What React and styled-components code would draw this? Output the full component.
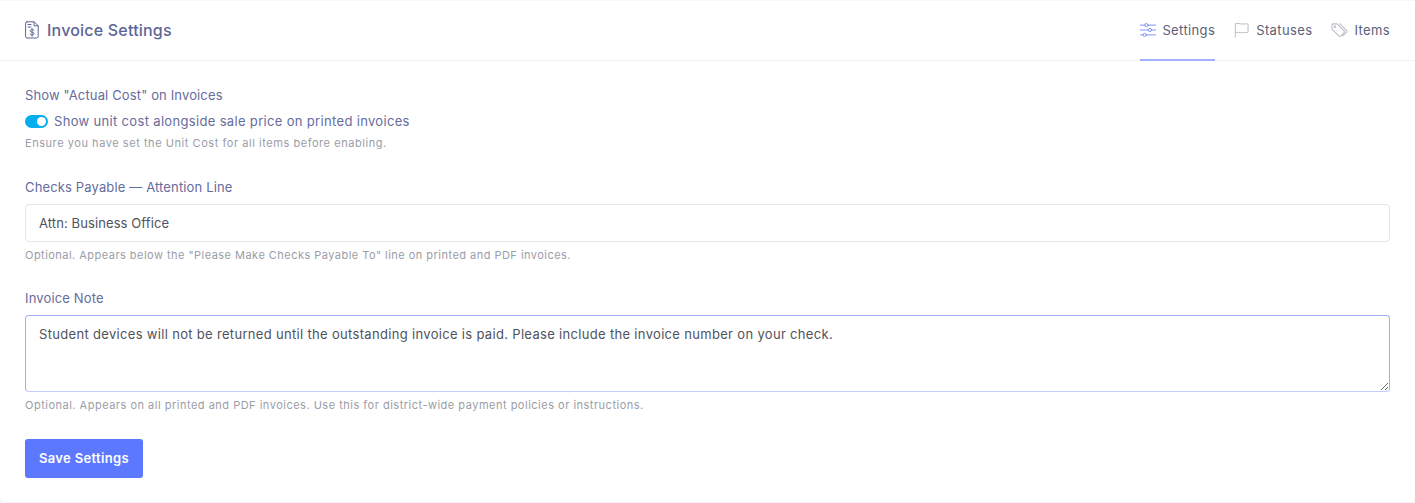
import React from "react";
import styled, { createGlobalStyle } from "styled-components";

const Global = createGlobalStyle`
  html, body { margin: 0; padding: 0; background: #f7f7fa; }
  * { box-sizing: border-box; }
  body { font-family: Inter, "Open Sans", sans-serif; -webkit-font-smoothing: antialiased; }
`;

const Card = styled.section`
  width: 1415px;
  height: 501px;
  margin-top: 1px;
  background: #fff;
  border-radius: 0 0 6px 6px;
`;

const Header = styled.header`
  height: 60px;
  padding: 0 25px;
  display: flex;
  align-items: center;
  justify-content: space-between;
  border-bottom: 1px solid #f1f1f6;
`;

const Title = styled.h1`
  margin: 0 0 2px;
  display: flex;
  align-items: center;
  gap: 8px;
  font-size: 16px;
  font-weight: 500;
  letter-spacing: 0.2px;
  color: #5e6496;
`;

const Tabs = styled.nav`
  display: flex;
  gap: 19px;
  align-self: stretch;
`;

const Tab = styled.a`
  display: flex;
  align-items: center;
  gap: 6px;
  height: 60px;
  margin-bottom: -1px;
  font-size: 13px;
  letter-spacing: 0.38px;
  color: #5d6178;
  border-bottom: 2px solid ${(p) => (p.$active ? "#a3afff" : "transparent")};
  svg { color: ${(p) => (p.$active ? "#7f92fb" : "#b9bac6")}; }
`;

const Body = styled.div`
  padding: 26px 25px 0;
`;

const Field = styled.div`
  margin-bottom: ${(p) => p.$gap}px;
`;

const Label = styled.div`
  font-size: 13px;
  line-height: 16px;
  letter-spacing: 0.14px;
  color: #666c9c;
`;

const SwitchRow = styled.label`
  display: flex;
  align-items: center;
  gap: 6px;
  margin-top: 10px;
  height: 16px;
  font-size: 13px;
  letter-spacing: 0.33px;
  color: #666c9c;
`;

const Switch = styled.span`
  position: relative;
  width: 23px;
  height: 13px;
  border-radius: 7px;
  background: #03aeef;
  &::after {
    content: "";
    position: absolute;
    top: 2px;
    right: 2px;
    width: 9px;
    height: 9px;
    border-radius: 50%;
    background: #fff;
  }
`;

const Help = styled.div`
  margin-top: ${(p) => p.$top}px;
  font-size: 11px;
  line-height: 14px;
  letter-spacing: ${(p) => p.$spacing}px;
  color: #9b9da8;
`;

const Input = styled.input`
  display: block;
  width: 100%;
  height: 38px;
  margin-top: 9px;
  padding: 0 13px;
  border: 1px solid #e4e5ee;
  border-radius: 4px;
  outline: none;
  background: #fff;
  font: 13px Inter, sans-serif;
  letter-spacing: 0.1px;
  color: #50525c;
`;

const TextArea = styled.textarea`
  display: block;
  width: 100%;
  height: 77px;
  margin-top: 9px;
  padding: 9px 13px;
  border: 1px solid #a0aefa;
  border-bottom-color: #c6cdf9;
  border-radius: 4px;
  outline: none;
  background: #fff;
  font: 13px/18px Inter, sans-serif;
  letter-spacing: 0.32px;
  color: #50525c;
`;

const Button = styled.button`
  display: block;
  width: 118px;
  height: 39px;
  padding: 0 0 2px;
  border: 0;
  border-radius: 3px;
  background: #5c78fe;
  color: #fff;
  font: 600 13px Inter, sans-serif;
  letter-spacing: 0.35px;
`;

const Svg = ({ size = 18, children }) => (
  <svg width={size} height={size} viewBox="0 0 18 18" fill="none" stroke="currentColor" strokeWidth="1.1" strokeLinecap="round" strokeLinejoin="round">
    {children}
  </svg>
);

const InvoiceIcon = () => (
  <svg width="14" height="18" viewBox="0 0 14 18" fill="none" stroke="#5e6496" strokeWidth="1" strokeLinecap="round" strokeLinejoin="round">
    <path d="M2 .8h7.200l4 4v10.600a1.600 1.600 0 0 1-1.600 1.600H2a1.400 1.400 0 0 1-1.400-1.400V2.200A1.400 1.400 0 0 1 2 .8Z" />
    <path d="M9 1v3.800h4" />
    <path d="M3 3.500h3M3 6h3" />
    <path d="M9 9.300c-.3-.6-1-.9-1.900-.9-1.100 0-1.900.6-1.900 1.400 0 1.900 3.900.9 3.900 2.800 0 .8-.8 1.400-2 1.400-.9 0-1.600-.3-2-1M7.100 7.600v7.600" />
  </svg>
);

const SlidersIcon = () => (
  <Svg size={16}>
    <path d="M0.500 3.500h5M9 3.500h8.500M0.500 9h9M13 9h4.500M0.500 14.500h3M7 14.500h10.500" />
    <circle cx="7.200" cy="3.500" r="1.800" />
    <circle cx="11.200" cy="9" r="1.800" />
    <circle cx="5.200" cy="14.500" r="1.800" />
  </Svg>
);

const FlagIcon = () => (
  <Svg size={16}>
    <path d="M1.500 17V2c4-1.200 4.500.3 7.500.3 2 0 4.500-.3 6-.3.500 0 .8.300.8.800V11c0 .5-.3.800-.8.800-2 0-4 .3-6.500.3-2.500 0-4.500-1-6.500-.3" />
  </Svg>
);

const TagsIcon = () => (
  <Svg size={17}>
    <path d="M1 3.500V7.500l7.300 7.300a1.500 1.500 0 0 0 2.100 0l3.400-3.400a1.500 1.500 0 0 0 0-2.100L6.500 2H2.500A1.500 1.500 0 0 0 1 3.500Z" />
    <path d="M9.500 2l6.800 6.800a1.500 1.500 0 0 1 0 2.100l-3.900 3.900" />
    <circle cx="4" cy="5" r=".8" />
  </Svg>
);

export default function App() {
  return (
    <>
      <Global />
      <Card>
        <Header>
          <Title>
            <InvoiceIcon />
            Invoice Settings
          </Title>
          <Tabs>
            <Tab $active><SlidersIcon />Settings</Tab>
            <Tab><FlagIcon />Statuses</Tab>
            <Tab><TagsIcon />Items</Tab>
          </Tabs>
        </Header>
        <Body>
          <Field $gap={29}>
            <Label>Show "Actual Cost" on Invoices</Label>
            <SwitchRow>
              <Switch />
              Show unit cost alongside sale price on printed invoices
            </SwitchRow>
            <Help $top={7} $spacing={0.55}>Ensure you have set the Unit Cost for all items before enabling.</Help>
          </Field>
          <Field $gap={28}>
            <Label>Checks Payable — Attention Line</Label>
            <Input readOnly value="Attn: Business Office" />
            <Help $top={6} $spacing={0.47}>Optional. Appears below the "Please Make Checks Payable To" line on printed and PDF invoices.</Help>
          </Field>
          <Field $gap={27}>
            <Label>Invoice Note</Label>
            <TextArea readOnly value="Student devices will not be returned until the outstanding invoice is paid. Please include the invoice number on your check." />
            <Help $top={6} $spacing={0.5}>Optional. Appears on all printed and PDF invoices. Use this for district-wide payment policies or instructions.</Help>
          </Field>
          <Button>Save Settings</Button>
        </Body>
      </Card>
    </>
  );
}
